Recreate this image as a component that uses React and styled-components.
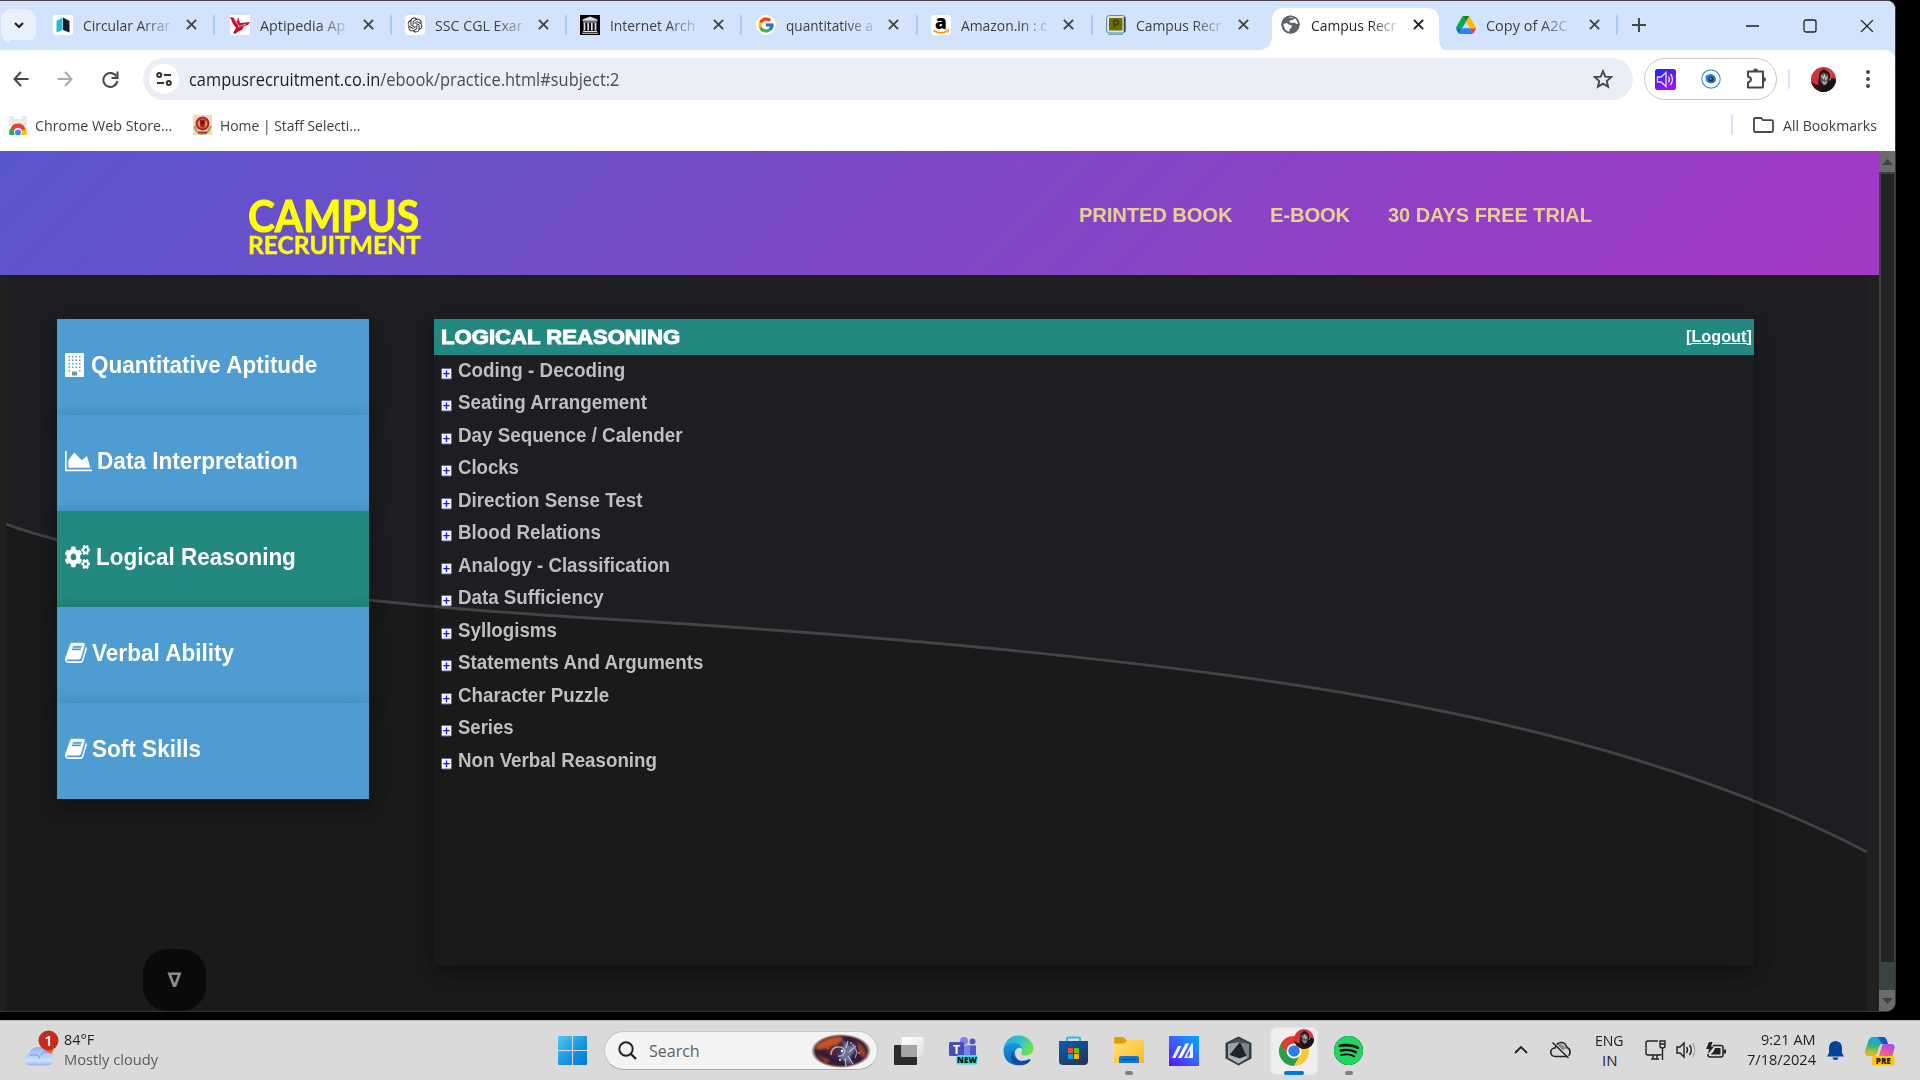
import React, { useLayoutEffect, useRef, useState } from "react";
import styled, { createGlobalStyle, css } from "styled-components";
import { FaCogs } from "react-icons/fa";
import { FcGoogle } from "react-icons/fc";
import { SiOpenai, SiSpotify } from "react-icons/si";

const UI = `"Open Sans", "Noto Sans", sans-serif`;
const ARIAL = `"Liberation Sans", Arial, sans-serif`;

const GlobalStyle = createGlobalStyle`
  * { box-sizing: border-box; }
  html, body { margin: 0; padding: 0; background: #000; overflow: hidden; }
  svg { display: block; flex: none; }
`;

/* ---------- text fitted to a column width ---------- */
const FitBox = styled.span`
  display: block;
  flex: none;
  width: ${(p) => p.$w}px;
  white-space: nowrap;
  font-family: ${(p) => p.$font || UI};
  font-size: ${(p) => p.$size}px;
  font-weight: ${(p) => p.$weight || 400};
  line-height: ${(p) => p.$lh || 20}px;
  color: ${(p) => p.$color || "#1f1f1f"};
  ${(p) =>
    p.$fade &&
    css`
      mask-image: linear-gradient(90deg, #000 68%, rgba(0, 0, 0, 0.2) 100%);
    `}
  ${(p) => p.$stroke && css`-webkit-text-stroke: ${p.$stroke}px currentColor;`}
`;
const FitInner = styled.span`
  display: inline-block;
  transform-origin: 0 50%;
`;
function Fit({ children, ...rest }) {
  const ref = useRef(null);
  const [scale, setScale] = useState(1);
  useLayoutEffect(() => {
    if (ref.current) setScale(rest.$w / ref.current.offsetWidth);
  }, [rest.$w]);
  return (
    <FitBox {...rest}>
      <FitInner ref={ref} style={{ transform: `scaleX(${scale})` }}>
        {children}
      </FitInner>
    </FitBox>
  );
}

/* ---------- browser window ---------- */
const Screen = styled.div`
  width: 1920px;
  height: 1080px;
  background: #000;
  display: flex;
  flex-direction: column;
  overflow: hidden;
`;
const BrowserWindow = styled.div`
  width: 1896px;
  height: 1012px;
  border-top: 1px solid #48484c;
  border-right: 1px solid #34383a;
  border-bottom: 1px solid #343434;
  border-radius: 0 9px 10px 0;
  overflow: hidden;
  display: flex;
  flex-direction: column;
  background: #fff;
`;
const TabStrip = styled.div`
  height: 49px;
  flex: none;
  background: #d3e3fd;
  display: flex;
  align-items: center;
`;
const TabSearch = styled.div`
  width: 35px;
  height: 34px;
  margin: 0 4.4px 0 1px;
  border-radius: 11px;
  background: #e9f1fe;
  display: grid;
  place-items: center;
`;
const Tab = styled.div`
  width: ${(p) => (p.$first ? 176.75 : 175.15)}px;
  height: 42px;
  margin-top: 7px;
  padding: 0 0 9px 13px;
  display: flex;
  align-items: center;
  position: relative;
  flex: none;
`;
const ActiveShape = styled.svg`
  position: absolute;
  left: -11px;
  top: 0;
`;
const Favicon = styled.span`
  width: 20px;
  height: 20px;
  margin-right: 10px;
  display: grid;
  place-items: center;
  position: relative;
  flex: none;

  svg {
    overflow: visible;
  }
`;
const TabTitle = styled.span`
  width: 98px;
  position: relative;
  flex: none;
`;
const TabClose = styled.span`
  width: 20px;
  display: grid;
  place-items: center;
  position: relative;
`;
const TabDivider = styled.span`
  width: 2px;
  height: 20px;
  margin-left: 12px;
  border-radius: 1px;
  background: #a8c7fa;
`;
const NewTab = styled.span`
  width: 41px;
  padding-bottom: 1px;
  display: grid;
  place-items: center;
`;
const WindowButtons = styled.div`
  margin-left: auto;
  display: flex;
`;
const WindowButton = styled.span`
  width: 57px;
  height: 48px;
  display: grid;
  place-items: center;
`;
const Toolbar = styled.div`
  height: 58px;
  flex: none;
  display: flex;
  align-items: center;
  background: #fff;
  border-top-right-radius: 9px;
  box-shadow: 10px -10px 0 #d3e3fd;
`;
const NavButtons = styled.div`
  display: flex;
  width: 133px;
`;
const NavButton = styled.span`
  width: ${(p) => p.$w || 45}px;
  flex: none;
  display: grid;
  place-items: center;
`;
const Omnibox = styled.div`
  width: 1490px;
  height: 42px;
  margin-left: 10px;
  border-radius: 21px;
  background: #ebeef7;
  display: flex;
  align-items: center;
  padding: 0 20px 0 6px;
`;
const SiteChip = styled.span`
  width: 30px;
  height: 30px;
  border-radius: 50%;
  background: #fff;
  display: grid;
  place-items: center;
  margin-right: 10px;
`;
const UrlHost = styled.span`
  color: #1f1f1f;
`;
const OmniEnd = styled.span`
  margin-left: auto;
`;
const ExtensionPill = styled.div`
  width: 133px;
  height: 42px;
  margin-left: 11px;
  border: 1px solid #c7c8ca;
  border-radius: 21px;
  display: flex;
  align-items: center;
  justify-content: space-between;
  padding: 0 9px 0 10px;
`;
const ThinRule = styled.span`
  width: 2px;
  height: 20px;
  border-radius: 1px;
  background: #d3e3fd;
  margin-left: ${(p) => p.$ml || 0}px;
`;
const Avatar = styled.span`
  margin-left: 21px;
  display: block;
`;
const Kebab = styled.span`
  margin-left: 30px;
`;
const Bookmarks = styled.div`
  height: 43px;
  flex: none;
  display: flex;
  align-items: center;
  padding: 0 18px 9px 9px;
`;
const Bookmark = styled.div`
  display: flex;
  align-items: center;
  gap: 8px;
  margin-right: ${(p) => p.$mr || 0}px;
`;
const AllBookmarks = styled.div`
  margin-left: auto;
  display: flex;
  align-items: center;
`;
const FolderWrap = styled.span`
  margin: 0 9px 0 20px;
`;

/* ---------- web page ---------- */
const Viewport = styled.div`
  flex: 1;
  display: flex;
  min-height: 0;
`;
const Page = styled.div`
  width: 1879px;
  display: flex;
  flex-direction: column;
  background: #20201f;
  position: relative;
`;
const SiteHeader = styled.header`
  height: 124px;
  flex: none;
  background: linear-gradient(135deg, #5a57cb 0%, #5c56cb 3%, #a239c5 97%, #a33ac6 100%);
  display: flex;
  align-items: flex-start;
  position: relative;
`;
const Logo = styled.div`
  margin: 46px 0 0 248px;
  width: 174px;
`;
const LogoSub = styled.div`
  margin-top: -2px;
`;
const SiteNav = styled.nav`
  margin: 53px 0 0 657px;
  display: flex;
  gap: 38px;
`;
const Backdrop = styled.svg`
  position: absolute;
  left: 6px;
  top: 124px;
`;
const Content = styled.main`
  flex: 1;
  min-height: 0;
  display: flex;
  align-items: flex-start;
  padding: 44px 0 0 57px;
  position: relative;
`;
const Sidebar = styled.aside`
  width: 312px;
  margin-right: 65px;
  flex: none;
`;
const SubjectTile = styled.div`
  height: 96px;
  padding: 0 0 4px 7.5px;
  display: flex;
  align-items: center;
  background: ${(p) => (p.$active ? "#238880" : "#4e9cd2")};
  box-shadow: 0 8px 16px rgba(0, 0, 0, 0.2), 0 6px 20px rgba(0, 0, 0, 0.19);
`;
const TileIcon = styled.span`
  width: ${(p) => p.$w}px;
  margin: 0 ${(p) => p.$gap}px 1px 0;

  svg {
    width: ${(p) => p.$w}px;
    height: 24px;
  }
`;
const Panel = styled.section`
  width: 1320px;
  height: 646px;
  flex: none;
  box-shadow: 0 8px 16px rgba(0, 0, 0, 0.2), 0 6px 20px rgba(0, 0, 0, 0.19);
`;
const PanelHeader = styled.div`
  height: 36px;
  padding: 0 2px 1px 7px;
  background: #238880;
  display: flex;
  align-items: center;
  justify-content: space-between;
`;
const Logout = styled.span`
  text-decoration: underline;
`;
const TopicList = styled.div`
  padding: 0 0 0 7px;
  margin-top: -1.3px;
`;
const Topic = styled.div`
  height: 32.5px;
  display: flex;
  align-items: center;
`;
const ExpandIcon = styled.span`
  width: 12px;
  margin: 8px 5px 0 0;
`;
const ScrollDown = styled.div`
  position: absolute;
  left: 143px;
  top: 798px;
  width: 63px;
  height: 62px;
  border-radius: 25px;
  background: #0a0a0a;
  display: grid;
  place-items: center;
`;
const Scrollbar = styled.div`
  width: 16px;
  display: flex;
  flex-direction: column;
  background: #3c4144;
`;
const ScrollButton = styled.div`
  height: 21px;
  background: #6b6b6b;
  display: grid;
  place-items: center;
`;
const ScrollThumb = styled.div`
  height: 788px;
  margin: 2px 1px 28px 2px;
  background: #232323;
`;

/* ---------- taskbar ---------- */
const Taskbar = styled.footer`
  height: 60px;
  margin-top: 8px;
  background: #dadada;
  border-top: 1px solid #bdbdbd;
  display: flex;
  align-items: center;
`;
const Weather = styled.div`
  width: 545px;
  padding-left: 23px;
  display: flex;
  align-items: center;
  gap: 9px;
`;
const WeatherText = styled.div`
  padding-bottom: 3px;
`;
const Slot = styled.div`
  width: ${(p) => p.$w || 55}px;
  height: 59px;
  display: flex;
  flex-direction: column;
  align-items: center;
  justify-content: center;
  position: relative;
`;
const SearchBox = styled.div`
  width: 274px;
  height: 39px;
  margin: 0 3.5px;
  border-radius: 20px;
  background: #f4f4f4;
  border: 1px solid #c6c6c6;
  border-bottom-color: #ababab;
  display: flex;
  align-items: center;
  padding: 0 6px 0 13px;
`;
const SearchLabel = styled.span`
  margin: 0 auto 0 12.5px;
`;
const ActiveTile = styled.div`
  width: 48px;
  height: 48px;
  border-radius: 6px;
  background: #eeeeee;
  border: 1px solid #e3e3e3;
  display: grid;
  place-items: center;
`;
const ChromeBadge = styled.span`
  position: absolute;
  left: 28px;
  top: 8px;
`;
const RunMark = styled.span`
  position: absolute;
  bottom: 5px;
  width: ${(p) => (p.$active ? 20 : 8)}px;
  height: 4px;
  border-radius: 2px;
  background: ${(p) => (p.$active ? "#0078d4" : "#808080")};
`;
const SpotifyDisc = styled.span`
  border-radius: 50%;
  background: #000;
`;
const Tray = styled.div`
  margin-left: auto;
  display: flex;
  align-items: center;
  padding-right: 25px;
`;
const TrayItem = styled.div`
  margin-right: ${(p) => p.$mr || 0}px;
  padding-bottom: ${(p) => p.$pb || 0}px;
  display: flex;
  flex-direction: column;
  align-items: ${(p) => p.$align || "center"};
`;

/* ---------- drawings ---------- */
const X = ({ s = 10, w = 2, c = "#474747" }) => (
  <svg width={s} height={s} viewBox="0 0 10 10">
    <path d="M.8.8l8.400 8.400M9.200.8L.8 9.200" stroke={c} strokeWidth={(w * 10) / s} />
  </svg>
);

const Portrait = ({ r }) => (
  <svg width={r * 2} height={r * 2} viewBox="0 0 24 24">
    <defs>
      <clipPath id={"av" + r}><circle cx="12" cy="12" r="12" /></clipPath>
    </defs>
    <g clipPath={`url(#av${r})`}>
      <rect width="24" height="24" fill="#c9353b" />
      <path d="M9 24L7 15l1-9 4-4 5 3 2 5 5 2v12z" fill="#161213" />
      <path d="M0 14l5 3 4-1 2 9H0z" fill="#3b1215" />
      <path d="M9 8l3-3 4 2 1 5-2 5-3 1-3-4z" fill="#5b5657" />
      <path d="M10 8l2 3 1-4 1 5 2-3M11 14l2 2 2-2" stroke="#cfcaca" strokeWidth="1" fill="none" />
      <path d="M17 3l3 4-2 6" stroke="#e2474b" strokeWidth="1.500" fill="none" />
    </g>
  </svg>
);

const ChromeMark = ({ s = 30 }) => (
  <svg width={s} height={s} viewBox="0 0 48 48">
    <path d="M24 24L3.200 12A24 24 0 0 1 44.800 12z" fill="#e33b2e" />
    <path d="M3.200 12A24 24 0 0 0 24 48L34.400 30 24 24z" fill="#2a9d48" />
    <path d="M44.800 12A24 24 0 0 1 24 48L34.400 30 24 13z" fill="#fcc934" />
    <path d="M24 13h20.800L42 9H5l-1.800 3L13.600 30z" fill="#e33b2e" />
    <circle cx="24" cy="24" r="12" fill="#fff" />
    <circle cx="24" cy="24" r="9.200" fill="#2f7de9" />
  </svg>
);

const favicons = {
  cake: (
    <svg width="20" height="20" viewBox="0 0 20 20">
      <rect width="20" height="20" rx="3" fill="#fff" />
      <path d="M3.500 6L9.500 2.500V15l-6 2.500z" fill="#27b8d3" />
      <path d="M10 2.500L16.500 6v11.500L10 15z" fill="#161a33" />
    </svg>
  ),
  bird: (
    <svg width="20" height="20" viewBox="0 0 20 20">
      <rect width="20" height="20" fill="#fff" />
      <path d="M0 2l4 1 3 4 1-5 2 6 10-1-2 3-4 1-2 4-3 1-4 3-2-1 3-5-3-4z" fill="#c8102e" />
      <path d="M4 4l5 7M8 12l8-3" stroke="#fff" strokeWidth=".6" />
    </svg>
  ),
  gpt: (
    <svg width="20" height="20" viewBox="0 0 20 20">
      <rect width="20" height="20" rx="4" fill="#fff" />
      <g transform="translate(2.500 2.500)"><SiOpenai size={15} color="#222" /></g>
    </svg>
  ),
  archive: (
    <svg width="20" height="20" viewBox="0 0 20 20">
      <rect width="20" height="20" fill="#000" />
      <path d="M10 1.500L2.500 4.500v1.200h15V4.500zM3 6.500h14v1H3zM3 16h14v1H3zM2 17.800h16v1H2z" fill="#ddd" />
      <path d="M4.500 8v7.500M8.200 8v7.500M11.800 8v7.500M15.500 8v7.500" stroke="#ddd" strokeWidth="1.800" />
    </svg>
  ),
  google: (
    <svg width="20" height="20" viewBox="0 0 20 20">
      <circle cx="10" cy="10" r="10" fill="#fff" />
      <g transform="translate(1 1)"><FcGoogle size={18} /></g>
    </svg>
  ),
  amazon: (
    <svg width="20" height="20" viewBox="0 0 20 20">
      <rect width="20" height="20" rx="3" fill="#fff" />
      <text x="10" y="13.500" textAnchor="middle" fontFamily="Open Sans, sans-serif" fontWeight="800" fontSize="19" fill="#000">a</text>
      <path d="M2.500 15.500q7 4.500 13.500.6" fill="none" stroke="#f90" strokeWidth="1.600" />
      <path d="M14.500 15l3-.2-.8 3" fill="none" stroke="#f90" strokeWidth="1.200" />
    </svg>
  ),
  placement: (
    <svg width="20" height="20" viewBox="0 0 20 20">
      <rect x=".5" y=".5" width="19" height="17.500" rx="3" fill="#d8e6e2" stroke="#5e8d96" />
      <rect x="3" y="3" width="13.500" height="12.500" rx="1" fill="#6b6f00" />
      <path d="M8 13V5.500h2.500q2 0 2 2t-2 2H8" fill="none" stroke="#3d4000" strokeWidth="1.400" />
      <path d="M18.500 2v15" stroke="#33474b" strokeWidth="1.500" />
      <path d="M2 19.300h15" stroke="#6ea8bf" strokeWidth="1.300" />
    </svg>
  ),
  globe: (
    <svg width="19" height="19" viewBox="0 0 20 20">
      <circle cx="10" cy="10" r="9.500" fill="#5f6368" />
      <path d="M2.500 9.500L6 8.500l2.500 1.800 3 .7-.6 2.500-2 1.500V18q-5.500-1-6.400-8.500zM7.500 3q4-2 7 .3l-2 1.900-2.500.3L8.500 7 11 8.500l3-.5 2.500 1.500 1.500-.5q-.4-4-3.500-6.500" fill="#fff" />
      <circle cx="10" cy="10" r="8.800" fill="none" stroke="#5f6368" strokeWidth="1.600" />
    </svg>
  ),
  drive: (
    <svg width="20" height="18" viewBox="0 0 87.300 78">
      <path d="m6.600 66.850 3.850 6.650c.8 1.400 1.950 2.500 3.300 3.300l13.750-23.800h-27.500c0 1.550.4 3.100 1.200 4.500z" fill="#0066da" />
      <path d="m43.650 25-13.750-23.800c-1.350.8-2.500 1.900-3.300 3.300l-25.400 44a9.060 9.060 0 0 0-1.200 4.500h27.500z" fill="#00ac47" />
      <path d="m73.550 76.800c1.350-.8 2.500-1.900 3.300-3.300l1.600-2.750 7.650-13.250c.8-1.400 1.200-2.950 1.200-4.500h-27.502l5.852 11.500z" fill="#ea4335" />
      <path d="m43.650 25 13.750-23.800c-1.350-.8-2.900-1.200-4.500-1.200h-18.500c-1.600 0-3.150.45-4.500 1.200z" fill="#00832d" />
      <path d="m59.800 53h-32.300l-13.750 23.800c1.350.8 2.900 1.200 4.500 1.200h50.800c1.600 0 3.150-.45 4.500-1.200z" fill="#2684fc" />
      <path d="m73.400 26.500-12.700-22c-.8-1.400-1.950-2.500-3.300-3.300l-13.750 23.800 16.150 28h27.450c0-1.550-.4-3.100-1.200-4.500z" fill="#ffba00" />
    </svg>
  ),
};

const tabs = [
  ["cake", "Circular Arrar", 87],
  ["bird", "Aptipedia Ap", 85],
  ["gpt", "SSC CGL Exar", 88],
  ["archive", "Internet Arch", 85],
  ["google", "quantitative a", 87],
  ["amazon", "Amazon.in : c", 86],
  ["placement", "Campus Recr", 85],
  ["globe", "Campus Recr", 85, true],
  ["drive", "Copy of A2C", 82],
];

const BookIcon = () => (
  <svg width="22" height="24" viewBox="0 100 1670 1620">
    <path
      fill="#fff"
      d="M1639 478q40 57 18 129l-275 906q-19 64-76.500 107.500t-122.500 43.500h-923q-77 0-148.500-53.500t-99.500-131.500q-24-67-2-127 0-4 3-27t4-37q1-8-3-21.500t-3-19.500q2-11 8-21t16.500-23.500 16.500-23.500q23-38 45-91.500t30-91.500q3-10 .5-30t-.5-28q3-11 17-28t17-23q21-36 42-92t25-90q1-9-2.500-32t.5-28q4-13 22-30.500t22-22.500q19-26 42.500-84.500t27.500-96.500q1-8-3-25.500t-2-26.500q2-8 9-18t18-23 17-21q8-12 16.500-30.500t15-35 16-36 19.500-32 26.500-23.500 36-11.500 47.500 5.500l-1 3q38-9 51-9h761q74 0 114 56t18 130l-274 906q-36 119-71.500 153.500t-128.500 34.500h-869q-27 0-38 15-11 16-1 43 24 70 144 70h923q29 0 56-15.500t35-41.500l300-987q7-22 5-57 38 15 59 43zm-1064 2q-4 13 2 22.500t20 9.500h608q13 0 25.500-9.500t16.500-22.500l21-64q4-13-2-22.500t-20-9.500h-608q-13 0-25.500 9.500t-16.500 22.500zm-56 192q-4 13 2 22.500t20 9.500h608q13 0 25.500-9.500t16.500-22.500l21-64q4-13-2-22.500t-20-9.500h-608q-13 0-25.500 9.500t-16.500 22.500z"
    />
  </svg>
);

const BuildingIcon = () => (
  <svg width="19" height="24" viewBox="0 0 19 24">
    <rect width="19" height="24" rx="1" fill="#fff" />
    {[3, 6.5, 10, 13.5].map((y) =>
      [3.5, 7, 10.5, 14].map((x) => <rect key={x + "-" + y} x={x} y={y} width="1.500" height="1.500" fill="#4e9cd2" />)
    )}
    <rect x="3.500" y="17" width="1.500" height="1.500" fill="#4e9cd2" />
    <rect x="14" y="17" width="1.500" height="1.500" fill="#4e9cd2" />
    <rect x="7" y="18.500" width="5" height="4" fill="#4e9cd2" />
  </svg>
);

const AreaIcon = () => (
  <svg width="27" height="24" viewBox="0 0 2048 1792">
    <path fill="#fff" d="M2048 1536v128h-2048v-1536h128v1408h1920zm-384-1024l256 896h-1664v-576l448-576 576 576z" />
  </svg>
);

const subjects = [
  { name: "Quantitative Aptitude", w: 226.5, icon: <BuildingIcon />, iw: 19, gap: 7 },
  { name: "Data Interpretation", w: 200.5, icon: <AreaIcon />, iw: 27, gap: 5 },
  { name: "Logical Reasoning", w: 199.5, icon: <FaCogs preserveAspectRatio="none" color="#fff" />, iw: 25, gap: 6, active: true },
  { name: "Verbal Ability", w: 142, icon: <BookIcon />, iw: 22, gap: 5 },
  { name: "Soft Skills", w: 109, icon: <BookIcon />, iw: 22, gap: 5 },
];

const topics = [
  ["Coding - Decoding", 167],
  ["Seating Arrangement", 189.5],
  ["Day Sequence / Calender", 224.5],
  ["Clocks", 61],
  ["Direction Sense Test", 184],
  ["Blood Relations", 142.5],
  ["Analogy - Classification", 212],
  ["Data Sufficiency", 146],
  ["Syllogisms", 99],
  ["Statements And Arguments", 245],
  ["Character Puzzle", 151],
  ["Series", 56],
  ["Non Verbal Reasoning", 199],
];

const Plus = () => (
  <svg width="11" height="12" viewBox="0 0 11 12">
    <rect x=".5" y=".5" width="10" height="10.500" rx="1" fill="#f3f3f8" stroke="#5a68b4" />
    <path d="M5.500 2.500v6.500M2.300 5.700h6.400" stroke="#1a1ad0" strokeWidth="1.300" />
  </svg>
);

/* ---------- sections ---------- */
function TabRow() {
  return (
    <TabStrip>
      <TabSearch>
        <svg width="10" height="7" viewBox="0 0 10 7"><path d="M1 1l4 4 4-4" fill="none" stroke="#1f1f1f" strokeWidth="2.200" /></svg>
      </TabSearch>
      {tabs.map(([icon, title, w, active], i) => (
        <Tab key={i} $first={i === 0}>
          {active && (
            <ActiveShape width="189" height="42" viewBox="0 0 189 42">
              <path d="M0 42q15 0 15-14V12Q15 0 27 0H170q12 0 12 12V28q0 14 7 14z" fill="#fff" />
            </ActiveShape>
          )}
          <Favicon>{favicons[icon]}</Favicon>
          <TabTitle><Fit $w={w} $size={15} $fade $color={active ? "#1f1f1f" : "#3c4043"}>{title}</Fit></TabTitle>
          <TabClose><X s={11} w={2} c={active ? "#1f1f1f" : "#474747"} /></TabClose>
          {i !== 6 && i !== 7 && <TabDivider />}
        </Tab>
      ))}
      <NewTab>
        <svg width="14" height="14" viewBox="0 0 14 14"><path d="M7 0v14M0 7h14" stroke="#474747" strokeWidth="2" /></svg>
      </NewTab>
      <WindowButtons>
        <WindowButton><svg width="13" height="2"><path d="M0 1h13" stroke="#1f1f1f" strokeWidth="1.500" /></svg></WindowButton>
        <WindowButton><svg width="14" height="14"><rect x="1" y="1" width="12" height="12" rx="2" fill="none" stroke="#1f1f1f" strokeWidth="1.300" /></svg></WindowButton>
        <WindowButton><X s={14} w={1.4} c="#1f1f1f" /></WindowButton>
      </WindowButtons>
    </TabStrip>
  );
}

function AddressRow() {
  return (
    <Toolbar>
      <NavButtons>
        <NavButton $w={41}>
          <svg width="16" height="16" viewBox="0 0 16 16"><path d="M15.500 8H1.500M8 1L1.500 8 8 15" fill="none" stroke="#474747" strokeWidth="2" /></svg>
        </NavButton>
        <NavButton $w={48}>
          <svg width="16" height="16" viewBox="0 0 16 16"><path d="M.5 8h14M8 1l6.500 7L8 15" fill="none" stroke="#a9aaac" strokeWidth="2" /></svg>
        </NavButton>
        <NavButton $w={43}>
          <svg width="17" height="17" viewBox="0 0 17 17"><path d="M14.500 5.500A7 7 0 1 0 15.300 10" fill="none" stroke="#474747" strokeWidth="2" /><path d="M15.500.5v6.500H9.500" fill="none" stroke="#474747" strokeWidth="2" /></svg>
        </NavButton>
      </NavButtons>
      <Omnibox>
        <SiteChip>
          <svg width="16" height="14" viewBox="0 0 16 14" fill="none" stroke="#333" strokeWidth="2"><circle cx="3.200" cy="3" r="2" /><path d="M8 3h7M1 11h7" /><circle cx="12.800" cy="11" r="2" /></svg>
        </SiteChip>
        <Fit $w={430} $size={17.5} $lh={26} $color="#4a4d52">
          <UrlHost>campusrecruitment.co.in</UrlHost>/ebook/practice.html#subject:2
        </Fit>
        <OmniEnd>
          <svg width="20" height="20" viewBox="0 0 20 20"><path d="M10 2.200l2.300 5.400 5.900.5-4.500 3.900 1.400 5.800-5.100-3.100-5.100 3.100 1.400-5.800L1.800 8.100l5.900-.5z" fill="none" stroke="#474747" strokeWidth="1.900" /></svg>
        </OmniEnd>
      </Omnibox>
      <ExtensionPill>
        <svg width="21" height="21" viewBox="0 0 21 21">
          <defs><linearGradient id="vol" x1="0" y1="0" x2=".6" y2="1"><stop offset="0" stopColor="#1626ff" /><stop offset="1" stopColor="#a113f5" /></linearGradient></defs>
          <rect width="21" height="21" rx="2.500" fill="url(#vol)" />
          <path d="M2.500 8h3.500l5-4.500v14L6 13H2.500zM13.500 7.500q2 3 0 6M15.500 5q4 5.500 0 11" fill="none" stroke="#e6e6ff" strokeWidth="1.300" />
        </svg>
        <svg width="20" height="20" viewBox="0 0 20 20">
          <circle cx="10" cy="10" r="9.200" fill="#fff" stroke="#4a95e0" strokeWidth="1.200" />
          <path d="M4.500 7q5.500-4 9 0 3.500 4.500-1 7-6 1-7.500-2.500z" fill="#1f7fe0" />
          <circle cx="10" cy="10" r="2.600" fill="#10304f" /><circle cx="9.600" cy="9.700" r=".9" fill="#8ac0f5" />
        </svg>
        <svg width="22" height="22" viewBox="0 0 22 22">
          <path d="M3 3.500h15V19.500H3v-5q3-1 3-3T3 8.500z" fill="none" stroke="#474747" strokeWidth="2" strokeLinejoin="round" />
          <path d="M8 3a2.500 2.500 0 0 1 5 0zM18.500 9a2.500 2.500 0 0 1 0 5z" fill="#474747" />
        </svg>
      </ExtensionPill>
      <ThinRule $ml={11} />
      <Avatar><Portrait r={12.5} /></Avatar>
      <Kebab>
        <svg width="4" height="18" viewBox="0 0 4 18" fill="#474747"><circle cx="2" cy="2" r="2" /><circle cx="2" cy="9" r="2" /><circle cx="2" cy="16" r="2" /></svg>
      </Kebab>
    </Toolbar>
  );
}

function BookmarkRow() {
  return (
    <Bookmarks>
      <Bookmark $mr={21}>
        <svg width="18" height="19" viewBox="0 0 18 19">
          <path d="M0 0h18v10H0z" fill="#e9e9e9" /><path d="M5 0h8v3H5z" fill="#fff" />
          <path d="M1.500 12.500q-2 3-1 6.500h6l-1-6z" fill="#34a853" /><path d="M16.500 12.500q2 3 1 6.500h-6l1-6z" fill="#fbbc04" />
          <path d="M1.500 13.500a7.700 7.700 0 0 1 15 0l-5 1H6z" fill="#ea4335" />
          <circle cx="9" cy="16" r="4" fill="#fff" /><circle cx="9" cy="16.500" r="3" fill="#4285f4" />
        </svg>
        <Fit $w={137} $size={15} $color="#3c4043">Chrome Web Store...</Fit>
      </Bookmark>
      <Bookmark>
        <svg width="19" height="20" viewBox="0 0 19 20">
          <rect width="19" height="20" fill="#e9dcc6" /><path d="M1.500 11q2 8 8 7.500 6 .5 8-7.500" fill="none" stroke="#a9a65a" strokeWidth="2.400" />
          <circle cx="9.500" cy="8.500" r="7" fill="#b8262a" /><circle cx="9.500" cy="8.500" r="4.800" fill="#d89a55" /><path d="M6.500 4.500h6l-1 8h-4z" fill="#a01f24" /><path d="M8.500 6h2v3h-2z" fill="#2c1b1b" /><path d="M5 17.500h9" stroke="#a33" strokeWidth="2" />
        </svg>
        <Fit $w={140} $size={15} $color="#3c4043">Home | Staff Selecti...</Fit>
      </Bookmark>
      <AllBookmarks>
        <ThinRule />
        <FolderWrap>
          <svg width="21" height="16" viewBox="0 0 21 16"><path d="M1 2.500Q1 1 2.500 1H8l2 2.200h8.500q1.500 0 1.500 1.500v8.800q0 1.500-1.500 1.500h-16Q1 15 1 13.500z" fill="none" stroke="#474747" strokeWidth="1.800" /></svg>
        </FolderWrap>
        <Fit $w={94} $size={15} $color="#3c4043">All Bookmarks</Fit>
      </AllBookmarks>
    </Bookmarks>
  );
}

function SitePage() {
  return (
    <Page>
      <Backdrop width="1861" height="736" viewBox="6 275 1861 736">
        <rect x="6" y="275" width="1861" height="736" fill="#1a1a1a" />
        <path d="M6 275V524C30 533 45 536 57 540C160 575 260 590 369 600C460 610 550 616 640 621C830 633 1040 650 1225 675C1450 705 1680 755 1867 852V275z" fill="#1e1d22" />
        <path d="M6 524C30 533 45 536 57 540C160 575 260 590 369 600C460 610 550 616 640 621C830 633 1040 650 1225 675C1450 705 1680 755 1867 852" fill="none" stroke="#434246" strokeWidth="2.800" />
      </Backdrop>
      <SiteHeader>
        <Logo>
          <Fit $w={171} $size={43} $lh={38} $font="Lato, sans-serif" $weight={700} $color="#ffff00" $stroke={1}>CAMPUS</Fit>
          <LogoSub>
            <Fit $w={173} $size={25} $lh={22} $font="Lato, sans-serif" $weight={700} $color="#ffff00" $stroke={0.4}>RECRUITMENT</Fit>
          </LogoSub>
        </Logo>
        <SiteNav>
          <Fit $w={153} $size={20} $lh={22} $font={ARIAL} $weight={700} $color="#e6d08f">PRINTED BOOK</Fit>
          <Fit $w={80} $size={20} $lh={22} $font={ARIAL} $weight={700} $color="#e6d08f">E-BOOK</Fit>
          <Fit $w={204} $size={20} $lh={22} $font={ARIAL} $weight={700} $color="#e6d08f">30 DAYS FREE TRIAL</Fit>
        </SiteNav>
      </SiteHeader>
      <Content>
        <Sidebar>
          {subjects.map((s) => (
            <SubjectTile key={s.name} $active={s.active}>
              <TileIcon $w={s.iw} $gap={s.gap}>{s.icon}</TileIcon>
              <Fit $w={s.w} $size={24} $lh={28} $font={ARIAL} $weight={700} $color="#fff">{s.name}</Fit>
            </SubjectTile>
          ))}
        </Sidebar>
        <Panel>
          <PanelHeader>
            <Fit $w={239} $size={21} $lh={24} $font={ARIAL} $weight={700} $color="#fff" $stroke={1}>LOGICAL REASONING</Fit>
            <Fit $w={66} $size={16} $font={ARIAL} $weight={700} $color="#fff"><Logout>[Logout]</Logout></Fit>
          </PanelHeader>
          <TopicList>
            {topics.map(([name, w]) => (
              <Topic key={name}>
                <ExpandIcon><Plus /></ExpandIcon>
                <Fit $w={w} $size={19.5} $lh={24} $font={ARIAL} $weight={700} $color="#bfbfbf">{name}</Fit>
              </Topic>
            ))}
          </TopicList>
        </Panel>
      </Content>
      <ScrollDown>
        <Fit $w={14} $size={20} $font={`"DejaVu Sans", sans-serif`} $weight={700} $color="#8c8c8c">∇</Fit>
      </ScrollDown>
    </Page>
  );
}

const CloudIcon = () => (
  <svg width="32" height="38" viewBox="0 0 32 38">
    <defs><linearGradient id="cl" x1="0" y1="0" x2="0" y2="1"><stop offset="0" stopColor="#8db4f0" /><stop offset=".75" stopColor="#cfe0fa" /><stop offset="1" stopColor="#8fb3ec" /></linearGradient></defs>
    <circle cx="24" cy="18" r="6" fill="#f7630c" />
    <path d="M7 33.500a6 6 0 0 1-1-11.800Q8 15 15 15q6 0 8 5 8 .5 8 7 0 6.500-7 6.500z" fill="url(#cl)" />
    <path d="M7 23.500q8-2 10 3M18 23.500q2-4 7-3.500" fill="none" stroke="#7fa5e6" strokeWidth="1.200" />
    <circle cx="25.500" cy="8.500" r="10" fill="#c42b1c" />
    <text x="25.500" y="13.500" textAnchor="middle" fontFamily="Open Sans, sans-serif" fontSize="14" fontWeight="600" fill="#fff">1</text>
  </svg>
);
const CloudWrap = styled.span`
  svg {
    overflow: visible;
  }
`;

const StartIcon = () => (
  <svg width="29" height="29" viewBox="0 0 29 29">
    <defs><linearGradient id="st" x1="0" y1="0" x2="1" y2="1"><stop offset="0" stopColor="#4ccbf9" /><stop offset=".6" stopColor="#1490df" /><stop offset="1" stopColor="#0078d4" /></linearGradient></defs>
    <path d="M1 0h13v14H0V1q0-1 1-1zM15 0h13q1 0 1 1v13H15zM0 15h14v14H1q-1 0-1-1zM15 15h14v13q0 1-1 1H15z" fill="url(#st)" />
  </svg>
);

const SearchArt = () => (
  <svg width="60" height="34" viewBox="0 0 60 34">
    <defs>
      <radialGradient id="neb"><stop offset="0" stopColor="#4a3550" /><stop offset=".6" stopColor="#2c1a3a" /><stop offset=".85" stopColor="#40202c" /><stop offset="1" stopColor="#40202c" stopOpacity="0" /></radialGradient>
      <filter id="soft"><feGaussianBlur stdDeviation="1.100" /></filter>
    </defs>
    <ellipse cx="30" cy="17" rx="30" ry="17" fill="url(#neb)" />
    <g filter="url(#soft)">
      <path d="M4 13Q12 3 30 2l2 5-8 5-16 4z" fill="#c0522b" />
      <path d="M46 7q10 7 9 18l-7-5zM6 21l13 5-3 4z" fill="#9a4028" />
      <path d="M33 6l5 6 5-3 1 8-5 6 2 8-7-4-6-2 3-7z" fill="#7f8cb6" opacity=".75" />
      <path d="M13 16l9-5 1 10z" fill="#6d2a20" />
    </g>
    <g fill="none" stroke="#cfc6cf" strokeWidth="1.300" opacity=".9">
      <path d="M20 21q0-7 6-8t8 4q-1 6-7 5M35 14l2-7M38 18l7-6M37 22l5 8M34 24l1 8" />
      <path d="M42 10l4 8-2 6" stroke="#8fa3d6" />
    </g>
    <g fill="#fff"><circle cx="31" cy="17" r="1.200" /><circle cx="40" cy="9" r=".8" /><circle cx="29" cy="26" r=".9" /><circle cx="48" cy="19" r=".7" /><circle cx="17" cy="14" r=".6" /></g>
  </svg>
);

const TeamsIcon = () => (
  <svg width="29" height="29" viewBox="0 0 29 29">
    <circle cx="15" cy="5" r="4" fill="#7b83eb" /><circle cx="23.500" cy="5.500" r="3" fill="#5059c9" />
    <path d="M18 9.500h9v9q0 4-4 4h-5z" fill="#5059c9" /><path d="M10 9.500h11v14H10z" fill="#7b83eb" />
    <rect x="0" y="6" width="15" height="14" rx="1.500" fill="#464eb8" />
    <text x="7.500" y="17.500" textAnchor="middle" fontFamily="Open Sans, sans-serif" fontWeight="700" fontSize="12" fill="#fff">T</text>
    <rect x="7.500" y="19" width="21" height="9.500" rx="2" fill="#28e3e3" />
    <text x="18" y="26.700" textAnchor="middle" fontFamily="Open Sans, sans-serif" fontWeight="800" fontSize="8.200" fill="#000">NEW</text>
  </svg>
);

const EdgeIcon = () => (
  <svg width="31" height="31" viewBox="0 0 31 31">
    <defs>
      <linearGradient id="e1" x1="0" y1="0" x2="1" y2=".35"><stop offset="0" stopColor="#23a8e0" /><stop offset=".6" stopColor="#35c1d0" /><stop offset="1" stopColor="#6be04e" /></linearGradient>
      <linearGradient id="e2" x1="0" y1="0" x2="0" y2="1"><stop offset="0" stopColor="#1798de" /><stop offset="1" stopColor="#0669c7" /></linearGradient>
    </defs>
    <path d="M.6 14.500C1 6 8 .5 15.500.5 24 .5 30.500 7 30.500 13c0 5-4 7.500-8 7.500-3.500 0-5-1.500-4-3 1.600-2.500.6-6-3-6-5 0-11-2.500-14.900 3z" fill="url(#e1)" />
    <path d="M.5 15.500C1 10 6 7.500 11 8c5 .3 8 3 8 6-2-2.500-6.500-1-7 3-.5 6 5 10.500 10 10-3 3-7 3.500-9 3C5 29.500.4 23 .5 15.500z" fill="url(#e2)" />
    <path d="M10.500 15.500c-1.500 9 7 12 14 9.200 2.500-1 4 0 2.500 1.500-4 4.500-10 4.500-13.500 3.800-7-2.500-7-11-3-14.500z" fill="#0f4f9e" />
  </svg>
);

const StoreIcon = () => (
  <svg width="29" height="30" viewBox="0 0 29 30">
    <defs><linearGradient id="sr" x1="0" y1="0" x2=".6" y2="1"><stop offset="0" stopColor="#0a5fb0" /><stop offset="1" stopColor="#22365e" /></linearGradient></defs>
    <path d="M8 6V2.500Q8 1.500 9 1.500h11q1 0 1 1V6" fill="none" stroke="#2ab8f0" strokeWidth="2" />
    <path d="M0 5h29v20q0 4-4 4H4q-4 0-4-4z" fill="url(#sr)" />
    <path d="M9 12h5v5H9z" fill="#f25022" /><path d="M15 12h5v5h-5z" fill="#7fba00" /><path d="M9 18h5v5H9z" fill="#00a4ef" /><path d="M15 18h5v5h-5z" fill="#ffb900" />
  </svg>
);

const ExplorerIcon = () => (
  <svg width="30" height="27" viewBox="0 0 30 27">
    <defs><linearGradient id="ex" x1="0" y1="0" x2="1" y2="1"><stop offset="0" stopColor="#ffe07a" /><stop offset="1" stopColor="#fbbc1c" /></linearGradient></defs>
    <path d="M0 1.500Q0 0 1.500 0H9l4 3.500V10H0z" fill="#dd9d0b" />
    <path d="M0 6.500h10L14 3h15q1 0 1 1v22H0z" fill="url(#ex)" />
    <path d="M5 26v-5q0-2 2-2h16q2 0 2 2v5z" fill="#1177cf" /><path d="M8 22.500h14" stroke="#0a4f95" strokeWidth="1.300" />
  </svg>
);

const AsusIcon = () => (
  <svg width="30" height="30" viewBox="0 0 30 30">
    <defs><linearGradient id="as" x1="1" y1="0" x2="0" y2="1"><stop offset="0" stopColor="#00a8ff" /><stop offset=".5" stopColor="#3a63ff" /><stop offset="1" stopColor="#5a12ee" /></linearGradient></defs>
    <rect width="30" height="30" fill="url(#as)" />
    <path d="M3 22L9 10h3.500L6.500 22z" fill="#e5edff" /><path d="M9 22L16.500 7.500H20L12.500 22z" fill="#fff" />
    <path d="M15 22L22.500 7.500H24V22h-3v-8l-3 6 1.500 2z" fill="#e5edff" /><path d="M21 18.500h3V22h-5z" fill="#fff" />
  </svg>
);

const ArmouryIcon = () => (
  <svg width="27" height="30" viewBox="0 0 27 30">
    <path d="M13.500.5L26.500 7v15.500L13.500 29.500.5 22.500V7z" fill="#353d43" />
    <path d="M13.500 3L24 8v13.500l-10.500 6L3 21.500V8z" fill="#79858d" />
    <path d="M13.500 3L24 8l-8-1-2-1-9 6-2-4z" fill="#49535a" />
    <path d="M15 6L4.500 19 3 21.500V8z" fill="#9aa5ac" />
    <path d="M15 6l6.500 14-7 2.500L4.500 19z" fill="#1d2327" />
    <path d="M4.500 19l10 3.500 7-2.500 1 2-9 5.500-10.500-6z" fill="#aab3b9" />
  </svg>
);

const CopilotIcon = () => (
  <svg width="30" height="30" viewBox="0 0 30 30">
    <defs>
      <linearGradient id="c1" x1=".4" y1="0" x2=".3" y2="1"><stop offset="0" stopColor="#1aa4f0" /><stop offset=".45" stopColor="#2fb08f" /><stop offset=".8" stopColor="#b5c52c" /><stop offset="1" stopColor="#f0b31a" /></linearGradient>
      <linearGradient id="c2" x1=".8" y1="0" x2=".2" y2="1"><stop offset="0" stopColor="#a64ff0" /><stop offset=".6" stopColor="#ee5a97" /><stop offset="1" stopColor="#ff8a4c" /></linearGradient>
    </defs>
    <path d="M8 1h10q3 0 4 4l1 3h-5q-3 0-4 3l-2 7q-1 2-4 2H4q-5 0-4-5L3.500 4.500Q5 1 8 1z" fill="url(#c1)" />
    <path d="M13 1h5q3 0 4 4l1 3h-6z" fill="#1358c9" />
    <path d="M19 8h7q4 0 3.500 4l-2 8q-1 3-4 3H10q3 0 4-3l2.500-9Q17.300 8 19 8z" fill="url(#c2)" />
    <rect x="7" y="20" width="22.500" height="9.500" rx="2" fill="#ffc40c" />
    <text x="18.300" y="27.800" textAnchor="middle" fontFamily="Open Sans, sans-serif" fontWeight="800" fontSize="8" fill="#1a1a1a">PRE</text>
  </svg>
);

function SystemTaskbar() {
  return (
    <Taskbar>
      <Weather>
        <CloudWrap><CloudIcon /></CloudWrap>
        <WeatherText>
          <Fit $w={30} $size={15}>84°F</Fit>
          <Fit $w={94} $size={15} $color="#5c5c5c">Mostly cloudy</Fit>
        </WeatherText>
      </Weather>
      <Slot><StartIcon /></Slot>
      <SearchBox>
        <svg width="19" height="19" viewBox="0 0 19 19" fill="none" stroke="#222"><circle cx="8" cy="8" r="6.700" strokeWidth="1.900" /><path d="M13 13l5 5" strokeWidth="2.300" /></svg>
        <SearchLabel><Fit $w={51} $size={16} $color="#606060">Search</Fit></SearchLabel>
        <SearchArt />
      </SearchBox>
      <Slot>
        <svg width="30" height="28" viewBox="0 0 30 28">
          <defs><linearGradient id="tv" x1="0" y1="0" x2="1" y2="1"><stop offset="0" stopColor="#fff" /><stop offset="1" stopColor="#e0e0e0" /></linearGradient></defs>
          <rect y="8" width="23" height="20" rx="1" fill="#2b2b29" /><rect x="7.500" width="22" height="20" rx="1" fill="url(#tv)" /><path d="M7.500 8h15.500v12H7.500z" fill="#a5a5a5" />
        </svg>
      </Slot>
      <Slot><TeamsIcon /></Slot>
      <Slot><EdgeIcon /></Slot>
      <Slot><StoreIcon /></Slot>
      <Slot><ExplorerIcon /><RunMark /></Slot>
      <Slot><AsusIcon /></Slot>
      <Slot><ArmouryIcon /></Slot>
      <Slot>
        <ActiveTile><ChromeMark /></ActiveTile>
        <ChromeBadge><Portrait r={10} /></ChromeBadge>
        <RunMark $active />
      </Slot>
      <Slot><SpotifyDisc><SiSpotify size={29} color="#1ed760" /></SpotifyDisc><RunMark /></Slot>
      <Tray>
        <TrayItem $mr={22} $pb={1}><svg width="14" height="8" viewBox="0 0 14 8"><path d="M1 7l6-6 6 6" fill="none" stroke="#1f1f1f" strokeWidth="1.800" /></svg></TrayItem>
        <TrayItem $mr={24} $pb={1}>
          <svg width="21" height="18" viewBox="0 0 21 18"><path d="M5 15.500a4 4 0 0 1 0-8.500Q7 1.500 11 1.500q4.500 0 6 5 3 .8 3 4.500 0 4.500-4 4.500z" fill="#d8d8d8" stroke="#222" strokeWidth="1.600" /><path d="M6 5q4-4 8 0l3 2-6 3z" fill="#8b8b8b" /><path d="M3.500 1.500l15.500 14.500" stroke="#dadada" strokeWidth="1.500" /><path d="M2.500 1.500L18.500 17" stroke="#222" strokeWidth="1.500" /></svg>
        </TrayItem>
        <TrayItem $mr={21} $pb={2}>
          <Fit $w={29} $size={15}>ENG</Fit>
          <Fit $w={15} $size={15}>IN</Fit>
        </TrayItem>
        <TrayItem $mr={10} $pb={1}>
          <svg width="21" height="20" viewBox="0 0 21 20" fill="none" stroke="#222" strokeWidth="1.400"><path d="M13 1H3Q1 1 1 3v10q0 2 2 2h12q1 0 1-1M6 19h8M8 15v4M12 15v4M15 1h5v5q0 2-2.500 2T15 6zM17.500 8v12M15 4h5" /></svg>
        </TrayItem>
        <TrayItem $mr={9} $pb={1}>
          <svg width="21" height="18" viewBox="0 0 21 18" fill="none" stroke="#222" strokeWidth="1.400"><path d="M1 6h3l4-4v14l-4-4H1zM10.500 6q2 3 0 6M13.500 4q3.500 5 0 10" /><path d="M16.500 2q4.500 7 0 14" stroke="#aaa" /></svg>
        </TrayItem>
        <TrayItem $mr={21} $pb={1}>
          <svg width="20" height="17" viewBox="0 0 20 17"><path d="M7 3.500h8q2 0 2 2V13q0 2-2 2H4q-2 0-2-2v-1" fill="none" stroke="#222" strokeWidth="1.500" /><path d="M9 6h5.500v6.500h-10L8 9zM17.500 7.500H20v4h-2.500zM3 0L0 7h3l-1 5 6-7.500H5L6.500 0z" fill="#222" /></svg>
        </TrayItem>
        <TrayItem $mr={11} $pb={3} $align="flex-end">
          <Fit $w={55} $size={15}>9:21 AM</Fit>
          <Fit $w={69} $size={15}>7/18/2024</Fit>
        </TrayItem>
        <TrayItem $mr={21}>
          <svg width="17" height="20" viewBox="0 0 17 20"><path d="M8.500 0q6.500.5 6.500 7v5l2 3.500H0L2 12V7Q2 .5 8.500 0zM5.500 16.500h6q-.5 2.500-3 2.500t-3-2.500z" fill="#05439c" /></svg>
        </TrayItem>
        <TrayItem><CopilotIcon /></TrayItem>
      </Tray>
    </Taskbar>
  );
}

export default function App() {
  return (
    <Screen>
      <GlobalStyle />
      <BrowserWindow>
        <TabRow />
        <AddressRow />
        <BookmarkRow />
        <Viewport>
          <SitePage />
          <Scrollbar>
            <ScrollButton><svg width="11" height="6"><path d="M0 6l5.500-6L11 6z" fill="#3c4345" /></svg></ScrollButton>
            <ScrollThumb />
            <ScrollButton><svg width="11" height="6"><path d="M0 0l5.500 6L11 0z" fill="#3c4345" /></svg></ScrollButton>
          </Scrollbar>
        </Viewport>
      </BrowserWindow>
      <SystemTaskbar />
    </Screen>
  );
}
